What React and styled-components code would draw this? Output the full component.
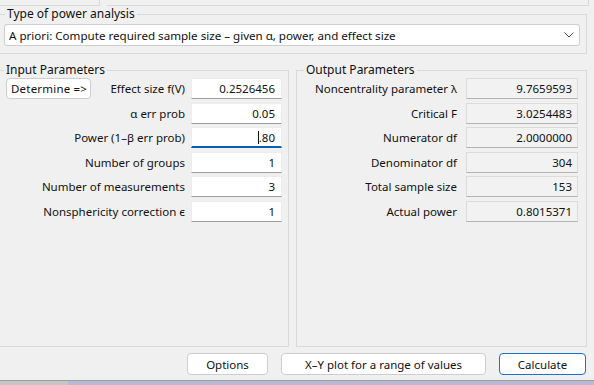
import styled, { createGlobalStyle } from "styled-components";

const GlobalStyle = createGlobalStyle`
  html, body {
    margin: 0;
    padding: 0;
    background: #f0f0f0;
  }
`;

const Window = styled.div`
  width: 594px;
  height: 385px;
  overflow: hidden;
  background: #f0f0f0;
  font-family: "Noto Sans", "Liberation Sans", sans-serif;
  font-size: 11.5px;
  color: #111;
  display: flex;
  flex-direction: column;
`;

const TopStrip = styled.div`
  display: flex;
  gap: 7px;
  height: 6px;
  flex-shrink: 0;
`;

const StubPanel = styled.div`
  width: ${(p) => p.$width}px;
  border-right: 1px solid #d9d9d9;
  border-bottom: 1px solid #d9d9d9;
`;

const Group = styled.fieldset`
  box-sizing: border-box;
  margin: 0;
  min-width: 0;
  border: 1px solid #d9d9d9;
  padding: ${(p) => p.$pad || "0"};
  display: flex;
  flex-direction: column;
`;

const Legend = styled.legend`
  margin-left: ${(p) => p.$ml || 0}px;
  padding: 0 2px;
  font-size: 12px;
  line-height: 14px;
  color: #111;
`;

const TypeGroup = styled(Group)`
  width: 588px;
  margin-left: -1px;
  margin-top: 1px;
`;

const Select = styled.div`
  margin-top: 3px;
  height: 22px;
  box-sizing: border-box;
  background: #fff;
  border: 1px solid #cfcfcf;
  border-radius: 3px;
  display: flex;
  align-items: center;
  justify-content: space-between;
  padding: 0 5px 0 4px;
  font-size: 11.6px;
`;

const Middle = styled.div`
  display: flex;
  gap: 7px;
  height: 284px;
  margin-top: 9px;
  margin-left: -1px;
  flex-shrink: 0;
`;

const ParamGroup = styled(Group)`
  width: ${(p) => p.$width}px;
`;

const Rows = styled.div`
  display: flex;
  flex-direction: column;
  gap: 3.6px;
  margin-top: 1px;
`;

const Row = styled.div`
  display: flex;
  align-items: center;
  justify-content: flex-end;
  gap: ${(p) => p.$gap}px;
  height: 21px;
`;

const Label = styled.span`
  white-space: nowrap;
`;

const PushButton = styled.button`
  font: inherit;
  color: #111;
  background: #fff;
  border: 1px solid ${(p) => (p.$default ? "#1f6fd1" : "#cdcdcd")};
  border-radius: 4px;
  height: ${(p) => p.$h || 22}px;
  width: ${(p) => p.$w}px;
  padding: 0 4px;
  text-align: ${(p) => p.$align || "center"};
  white-space: nowrap;
  cursor: default;
  box-sizing: border-box;
`;

const DetermineButton = styled(PushButton)`
  margin-right: auto;
  padding-left: 4px;
  letter-spacing: 0.2px;
`;

const Field = styled.div`
  box-sizing: border-box;
  width: ${(p) => p.$w}px;
  height: 21px;
  display: flex;
  align-items: center;
  justify-content: flex-end;
  padding-right: ${(p) => p.$pr}px;
  background: ${(p) => (p.$readOnly ? "#f2f2f2" : "#fff")};
  border: 1px solid ${(p) => (p.$readOnly ? "#dcdcdc" : "#ececec")};
  border-bottom: ${(p) =>
    p.$focused
      ? "2px solid #0a5fb4"
      : p.$readOnly
      ? "1px solid #b4b4b4"
      : "1px solid #9c9c9c"};
  white-space: nowrap;
`;

const Caret = styled.span`
  display: inline-block;
  width: 1px;
  height: 13px;
  background: #111;
`;

const Footer = styled.div`
  display: flex;
  justify-content: flex-end;
  gap: 13px;
  padding-right: 8px;
  margin-top: 6px;
  flex-shrink: 0;
`;

const StatusBar = styled.div`
  margin-top: auto;
  height: 4px;
  border-top: 1px solid #9c9c9c;
  display: flex;
`;

const StatusPart = styled.div`
  width: ${(p) => (p.$w ? `${p.$w}px` : "auto")};
  flex: ${(p) => (p.$w ? "none" : 1)};
  background: ${(p) => p.$color};
`;

function Chevron() {
  return (
    <svg width="10" height="6" viewBox="0 0 10 6">
      <path d="M0.5 0.5 L5 5 L9.5 0.5" fill="none" stroke="#555" strokeWidth="1" />
    </svg>
  );
}

const inputs = [
  { label: "α err prob", value: "0.05" },
  { label: "Power (1–β err prob)", value: ".80", focused: true },
  { label: "Number of groups", value: "1" },
  { label: "Number of measurements", value: "3" },
  { label: "Nonsphericity correction ϵ", value: "1" },
];

const outputs = [
  { label: "Noncentrality parameter λ", value: "9.7659593" },
  { label: "Critical F", value: "3.0254483" },
  { label: "Numerator df", value: "2.0000000" },
  { label: "Denominator df", value: "304" },
  { label: "Total sample size", value: "153" },
  { label: "Actual power", value: "0.8015371" },
];

export default function App() {
  return (
    <>
      <GlobalStyle />
      <Window>
        <TopStrip>
          <StubPanel $width={99} />
          <StubPanel $width={481} />
        </TopStrip>

        <TypeGroup $pad="0 6px 7px 4px">
          <Legend $ml={1}>Type of power analysis</Legend>
          <Select>
            <span>A priori: Compute required sample size – given α, power, and effect size</span>
            <Chevron />
          </Select>
        </TypeGroup>

        <Middle>
          <ParamGroup $width={290} $pad="0 6px 0 6px">
            <Legend $ml={-2}>Input Parameters</Legend>
            <Rows>
              <Row $gap={6}>
                <DetermineButton $w={85} $h={21} $align="left">
                  Determine =&gt;
                </DetermineButton>
                <Label>Effect size f(V)</Label>
                <Field $w={91} $pr={6}>0.2526456</Field>
              </Row>
              {inputs.map((r) => (
                <Row key={r.label} $gap={6}>
                  <Label>{r.label}</Label>
                  <Field $w={91} $pr={6} $focused={r.focused}>
                    {r.focused && <Caret />}
                    {r.value}
                  </Field>
                </Row>
              ))}
            </Rows>
          </ParamGroup>

          <ParamGroup $width={291} $pad="0 8px 0 6px">
            <Legend $ml={1}>Output Parameters</Legend>
            <Rows>
              {outputs.map((r) => (
                <Row key={r.label} $gap={9}>
                  <Label>{r.label}</Label>
                  <Field $w={112} $pr={5} $readOnly>
                    {r.value}
                  </Field>
                </Row>
              ))}
            </Rows>
          </ParamGroup>
        </Middle>

        <Footer>
          <PushButton $w={81}>Options</PushButton>
          <PushButton $w={205}>X–Y plot for a range of values</PushButton>
          <PushButton $w={87} $default>
            Calculate
          </PushButton>
        </Footer>

        <StatusBar>
          <StatusPart $w={68} $color="#c6c6c6" />
          <StatusPart $color="#b9b9d4" />
        </StatusBar>
      </Window>
    </>
  );
}
